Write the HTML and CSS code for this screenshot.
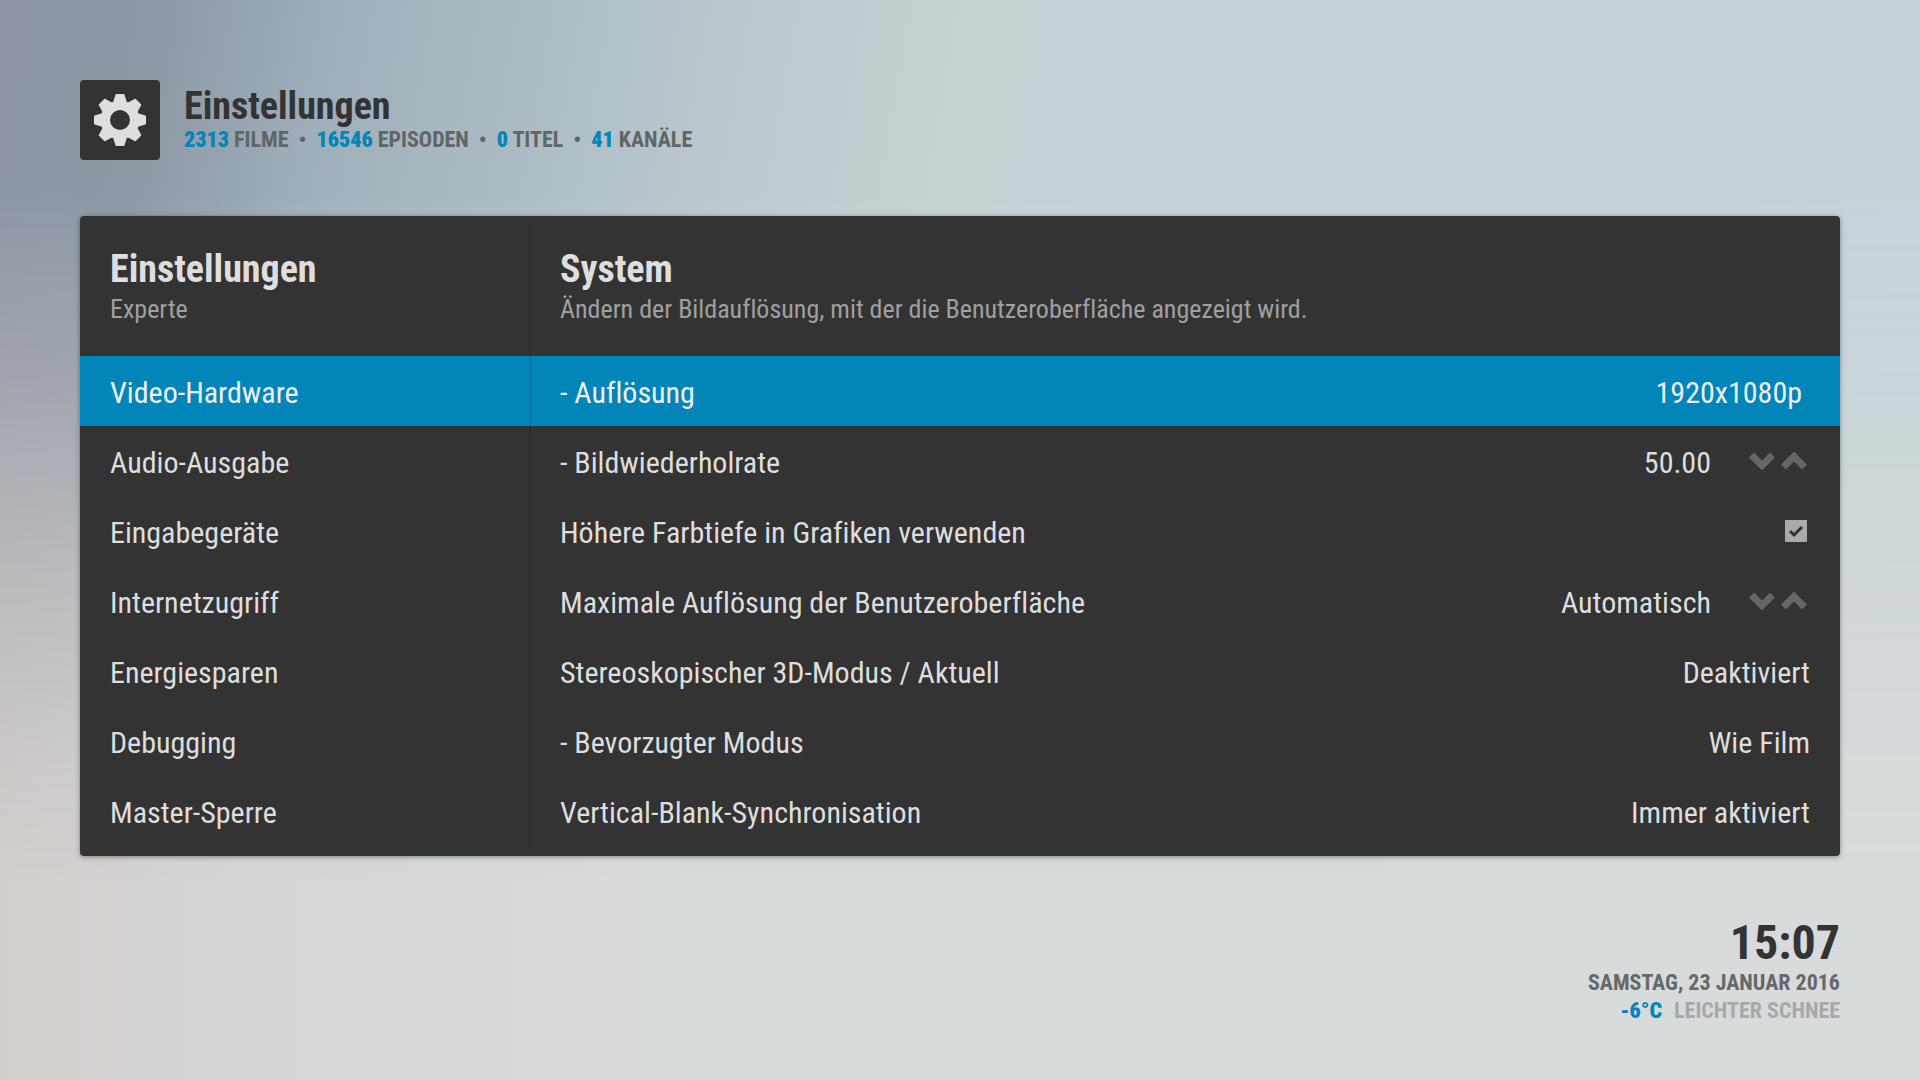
FILE: index.html
```html
<!DOCTYPE html>
<html lang="de">
<head>
<meta charset="utf-8">
<title>Einstellungen</title>
<link rel="stylesheet" href="styles.css">
</head>
<body>
<header class="top">
  <span class="logo">
    <svg viewBox="-40 -40 80 80" width="80" height="80" aria-hidden="true">
      <defs><path id="tooth" d="M-4 -25.5H4L6.500 -17H-6.500Z"/></defs>
      <g fill="#dedede" stroke="#dedede" stroke-linejoin="round">
        <use href="#tooth"/><use href="#tooth" transform="rotate(45)"/><use href="#tooth" transform="rotate(90)"/><use href="#tooth" transform="rotate(135)"/>
        <use href="#tooth" transform="rotate(180)"/><use href="#tooth" transform="rotate(225)"/><use href="#tooth" transform="rotate(270)"/><use href="#tooth" transform="rotate(315)"/>
        <circle r="19"/>
      </g>
      <circle r="10" fill="#333"/>
    </svg>
  </span>
  <div class="top-text">
    <h1 class="title">Einstellungen</h1>
    <ul class="stats">
      <li><b>2313</b> FILME</li>
      <li><b>16546</b> EPISODEN</li>
      <li><b>0</b> TITEL</li>
      <li><b>41</b> KANÄLE</li>
    </ul>
  </div>
</header>

<main class="card">
  <nav class="side">
    <div class="head">
      <h2 class="title">Einstellungen</h2>
      <p class="sub">Experte</p>
    </div>
    <a class="row active" href="#video">Video-Hardware</a>
    <a class="row" href="#audio">Audio-Ausgabe</a>
    <a class="row" href="#input">Eingabegeräte</a>
    <a class="row" href="#internet">Internetzugriff</a>
    <a class="row" href="#power">Energiesparen</a>
    <a class="row" href="#debug">Debugging</a>
    <a class="row" href="#lock">Master-Sperre</a>
  </nav>
  <section class="settings">
    <div class="head">
      <h2 class="title">System</h2>
      <p class="sub">Ändern der Bildauflösung, mit der die Benutzeroberfläche angezeigt wird.</p>
    </div>
    <div class="row active"><span id="l1">- Auflösung</span><button class="value inset" aria-labelledby="l1">1920x1080p</button></div>
    <div class="row"><span>- Bildwiederholrate</span>
      <div class="spin"><output>50.00</output>
        <button class="arrow" aria-label="Verringern"><svg viewBox="0 0 26 18" width="26" height="18"><path d="M2.500 3L13 13.500L23.500 3"/></svg></button>
        <button class="arrow" aria-label="Erhöhen"><svg viewBox="0 0 26 18" width="26" height="18"><path d="M2.500 15L13 4.500L23.500 15"/></svg></button>
      </div></div>
    <div class="row"><label for="depth">Höhere Farbtiefe in Grafiken verwenden</label><span class="tick"><input id="depth" type="checkbox" checked><svg viewBox="0 0 22 22" width="22" height="22" aria-hidden="true"><path d="M5 11L9 15L17 7"/></svg></span></div>
    <div class="row"><span>Maximale Auflösung der Benutzeroberfläche</span>
      <div class="spin"><output>Automatisch</output>
        <button class="arrow" aria-label="Verringern"><svg viewBox="0 0 26 18" width="26" height="18"><path d="M2.500 3L13 13.500L23.500 3"/></svg></button>
        <button class="arrow" aria-label="Erhöhen"><svg viewBox="0 0 26 18" width="26" height="18"><path d="M2.500 15L13 4.500L23.500 15"/></svg></button>
      </div></div>
    <div class="row"><span id="l5">Stereoskopischer 3D-Modus / Aktuell</span><button class="value" aria-labelledby="l5">Deaktiviert</button></div>
    <div class="row"><span id="l6">- Bevorzugter Modus</span><button class="value" aria-labelledby="l6">Wie Film</button></div>
    <div class="row"><span id="l7">Vertical-Blank-Synchronisation</span><button class="value" aria-labelledby="l7">Immer aktiviert</button></div>
  </section>
</main>

<footer class="info">
  <time class="clock">15:07</time>
  <p class="date">SAMSTAG, 23 JANUAR 2016</p>
  <p class="weather"><b>-6°C</b><span>LEICHTER SCHNEE</span></p>
</footer>
</body>
</html>
```
FILE: styles.css
```css
* { box-sizing: border-box; margin: 0; }

body {
  position: relative;
  min-height: 100vh;
  padding: 80px 80px 32px;
  font: 400 30px "Roboto Condensed", Roboto, sans-serif;
  font-variant-ligatures: none;
  color: #dedede;
  background: linear-gradient(90deg, #d4cecb 0%, #d4d2d1 7%, #d6d8d7 18%, #d8dadb 32%, #d6dadb 45%, #d7dbdc 100%);
}
/* cool upper backdrop that fades into the pale lower one */
body::before {
  content: "";
  position: absolute;
  inset: 0;
  z-index: -1;
  background: linear-gradient(100deg, #8f96a3 0%, #8e99a6 8%, #9fafb9 16%, #adbcc4 26%, #bcc9ce 36%, #c5d1d2 46%, #c4d2d8 56%, #c5d3d8 100%);
  -webkit-mask-image: linear-gradient(180deg, #000 18%, rgba(0, 0, 0, .75) 35%, rgba(0, 0, 0, .4) 52%, rgba(0, 0, 0, .1) 70%, transparent 82%);
  mask-image: linear-gradient(180deg, #000 18%, rgba(0, 0, 0, .75) 35%, rgba(0, 0, 0, .4) 52%, rgba(0, 0, 0, .1) 70%, transparent 82%);
}

.top { display: flex; gap: 24px; }
.logo { display: block; width: 80px; height: 80px; background: #333; border-radius: 4px; }
.logo svg { display: block; }
.top-text { padding-top: 3px; color: #333; }
.title { font-size: 38px; line-height: 46px; font-weight: 700; }
.stats { display: flex; padding: 0; list-style: none; font-size: 22px; line-height: 22px; font-weight: 700; color: #606567; }
.stats li + li::before { content: "•"; margin: 0 10px; }
b { color: #0285b8; }

.card {
  display: flex;
  position: relative;
  margin-top: 56px;
  padding-bottom: 10px;
  background: #333;
  border-radius: 4px;
  box-shadow: 0 1px 5px rgba(0, 0, 0, .4);
}
.card::after { content: ""; position: absolute; top: 10px; bottom: 10px; left: 450px; width: 1px; background: rgba(0, 0, 0, .15); }
.side { flex: 0 0 450px; }
.settings { flex: 1; }
.head { height: 140px; padding: 30px 30px 0; }
.sub { font-size: 26px; line-height: 34px; color: #a0a0a0; }
.row {
  display: flex;
  justify-content: space-between;
  height: 70px;
  padding: 4px 30px 0;
  line-height: 66px;
  color: inherit;
  text-decoration: none;
}
.active { background: #0285b8; color: #eee; }

button { padding: 0; border: 0; background: none; color: inherit; font: inherit; line-height: inherit; cursor: pointer; }
.inset { padding-right: 8px; }
.spin { display: flex; gap: 6px; padding-right: 3px; }
.spin output { margin-right: 32px; }
.arrow { height: 62px; line-height: 0; }
.arrow path { fill: none; stroke: #666; stroke-width: 7; }
.tick { position: relative; width: 22px; height: 22px; margin: 20px 3px 0 0; }
.tick input { display: block; appearance: none; width: 22px; height: 22px; margin: 0; background: #aaa; }
.tick svg { display: none; position: absolute; inset: 0; pointer-events: none; }
.tick input:checked + svg { display: block; }
.tick path { fill: none; stroke: #333; stroke-width: 3; }

.info { display: flex; flex-direction: column; margin-top: 60px; text-align: right; font-size: 22px; line-height: 28px; font-weight: 700; }
.clock { font-size: 48px; line-height: 53px; color: #333; }
.date { color: #666869; }
.weather { color: #a6a8a9; }
.weather b { margin-right: 12px; }
```
